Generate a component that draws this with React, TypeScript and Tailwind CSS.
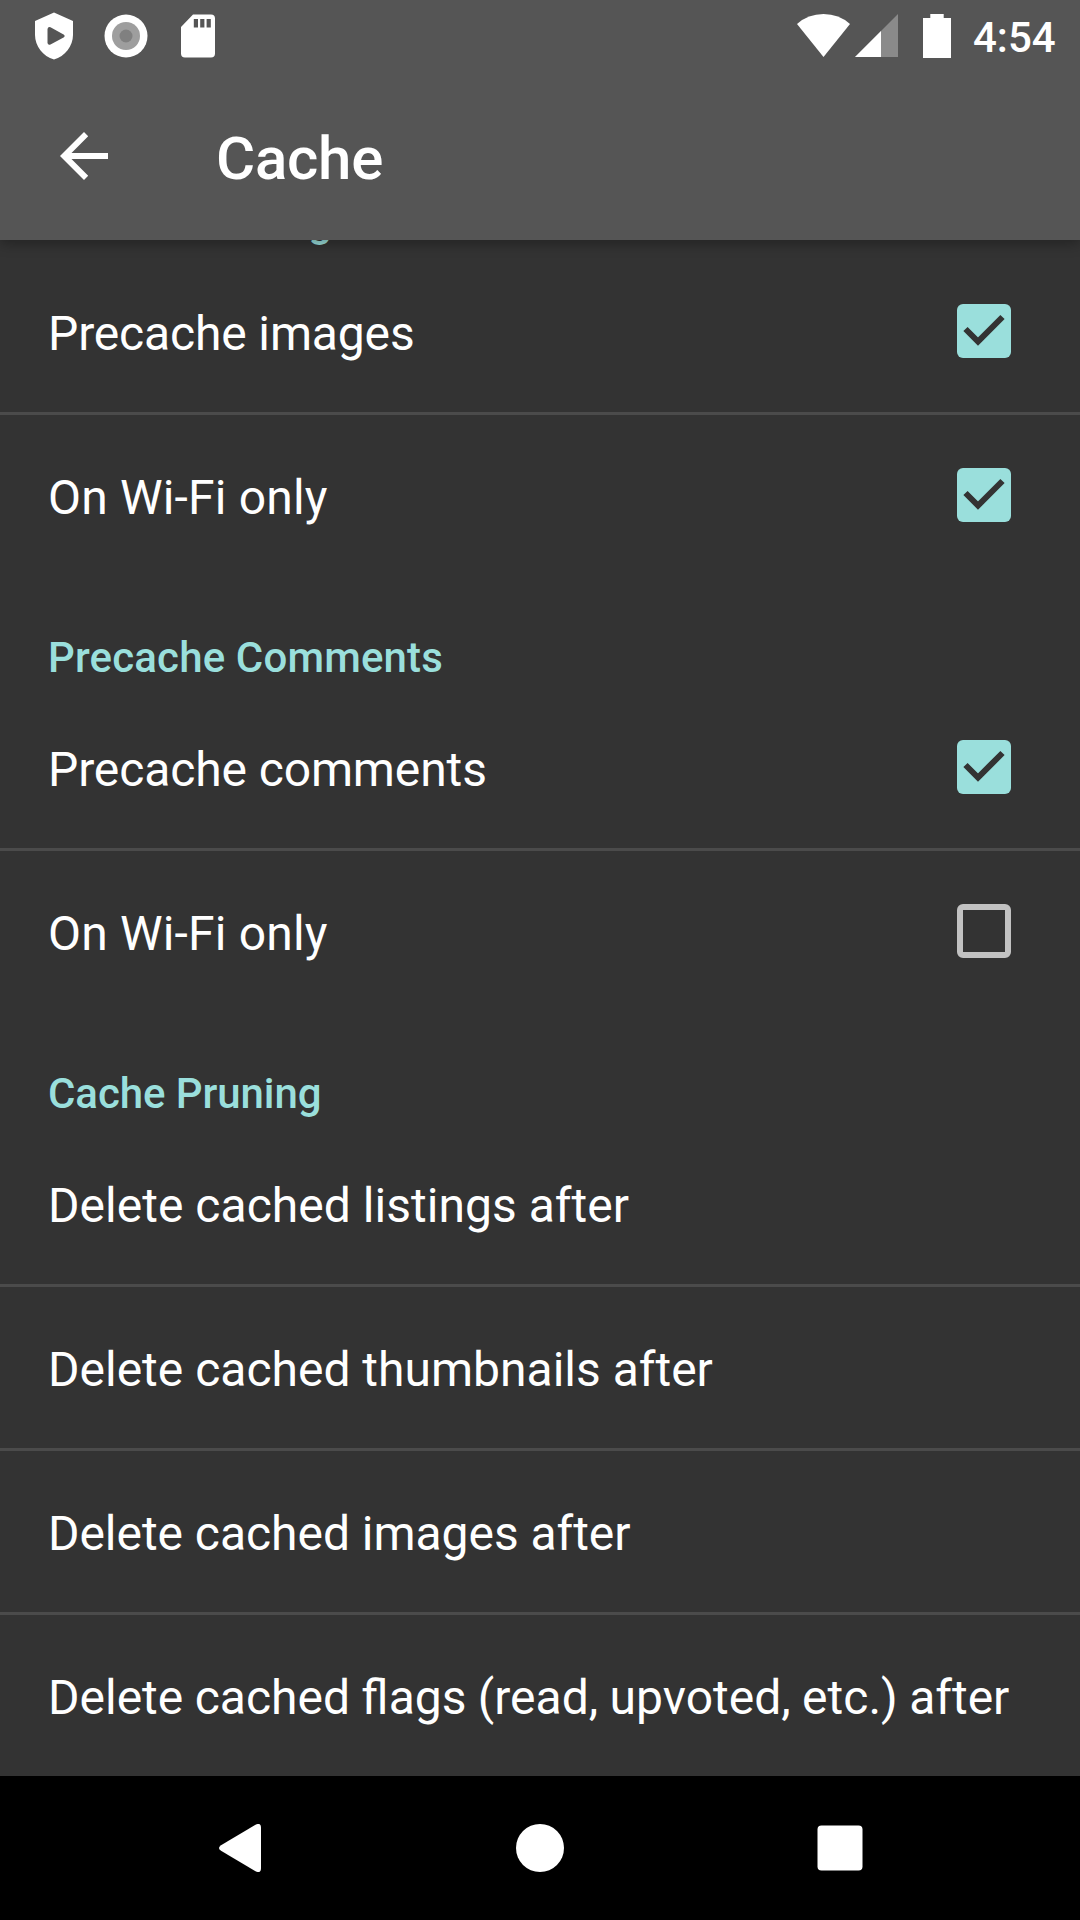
import React from "react";

type Item = { label: string; checked?: boolean; tracking?: string };
type Section = { title: string; tracking?: string; items: Item[] };

const sections: Section[] = [
  {
    title: "Precache Images",
    tracking: "tracking-[0.22px]",
    items: [
      { label: "Precache images", checked: true, tracking: "tracking-[-0.15px]" },
      { label: "On Wi-Fi only", checked: true, tracking: "tracking-[0.18px]" },
    ],
  },
  {
    title: "Precache Comments",
    tracking: "tracking-[0.15px]",
    items: [
      { label: "Precache comments", checked: true, tracking: "tracking-[-0.12px]" },
      { label: "On Wi-Fi only", checked: false, tracking: "tracking-[0.18px]" },
    ],
  },
  {
    title: "Cache Pruning",
    tracking: "tracking-[-0.08px]",
    items: [
      { label: "Delete cached listings after", tracking: "tracking-[0.03px]" },
      { label: "Delete cached thumbnails after" },
      { label: "Delete cached images after", tracking: "tracking-[-0.04px]" },
      { label: "Delete cached flags (read, upvoted, etc.) after", tracking: "[word-spacing:-0.5px]" },
    ],
  },
];

function Checkbox({ checked }: { checked: boolean }) {
  return (
    <svg width="54" height="54" viewBox="0 0 54 54" className="block shrink-0">
      {checked ? (
        <>
          <rect width="54" height="54" rx="6" fill="#9adfdc" />
          <path d="M8.5 25 L21 37.5 L45.5 13" fill="none" stroke="#333333" strokeWidth="6" />
        </>
      ) : (
        <rect x="3" y="3" width="48" height="48" rx="3" fill="none" stroke="#c2c2c2" strokeWidth="6" />
      )}
    </svg>
  );
}

function StatusBar() {
  return (
    <div className="flex h-[72px] items-start justify-between pl-[18px] pr-[24px]">
      <div className="flex">
        <svg width="72" height="72" viewBox="0 0 72 72">
          <path
            fillRule="evenodd"
            fill="#fff"
            d="M36 12.5 L55 21 V35 C55 46 47 56.500 36 59.500 C25 56.500 17 46 17 35 V21 Z M29.500 29 V43 Q30 45.500 32.500 44.500 L46 37.200 Q47.500 36 46 34.800 L32.500 27.300 Q30 26.500 29.500 29 Z"
          />
        </svg>
        <svg width="72" height="72" viewBox="0 0 72 72">
          <circle cx="36" cy="36" r="21.500" fill="#fff" />
          <circle cx="36" cy="36" r="14" fill="#9e9e9e" />
          <circle cx="36" cy="36" r="6.500" fill="#808080" />
        </svg>
        <svg width="72" height="72" viewBox="0 0 72 72">
          <path
            fillRule="evenodd"
            fill="#fff"
            d="M31 14.500 H49 Q53 14.500 53 18.500 V53.500 Q53 57.500 49 57.500 H23 Q19 57.500 19 53.500 V27 Z M31.800 19 V27.500 H36 V19 Z M38.200 19 V27.500 H42.400 V19 Z M44.600 19 V27.500 H48.800 V19 Z"
          />
        </svg>
      </div>
      <div className="flex items-start">
        <svg width="54" height="72" viewBox="0 0 54 72">
          <path d="M0 24 Q11 14 26.500 14 Q42 14 53 24 L26.500 57 Z" fill="#fff" />
        </svg>
        <svg width="44" height="72" viewBox="0 0 44 72" className="ml-[4px]">
          <path d="M0 57 L43 14 V57 Z" fill="#8a8a8a" />
          <path d="M0 57 L26 31 V57 Z" fill="#fff" />
        </svg>
        <svg width="28" height="72" viewBox="0 0 28 72" className="ml-[24px]">
          <path d="M7.300 14 H20.700 V18 H28 V58 H0 V18 H7.300 Z" fill="#fff" />
        </svg>
        <span className="ml-[22px] w-[83px] whitespace-nowrap text-[42px] font-medium leading-[76px]">4:54</span>
      </div>
    </div>
  );
}

export default function App() {
  return (
    <div className="flex h-[1920px] w-[1080px] flex-col overflow-hidden bg-[#333333] font-['Roboto',sans-serif] text-white">
      <header className="relative z-10 h-[240px] shrink-0 bg-[#555555] shadow-[0_4px_12px_rgba(0,0,0,0.3)]">
        <StatusBar />
        <div className="flex h-[168px] items-center pl-[60px]">
          <svg width="48" height="48" viewBox="0 0 48 48">
            <path d="M48 21 H11.500 L28.200 4.200 L24 0 L0 24 L24 48 L28.200 43.800 L11.500 27 H48 Z" fill="#fff" />
          </svg>
          <h1 className="mt-[6px] ml-[108px] text-[60px] font-medium leading-[70px] tracking-[-0.25px]">Cache</h1>
        </div>
      </header>

      <main className="-mt-[100px] h-[1636px] shrink-0 overflow-hidden">
        {sections.map((section) => (
          <section key={section.title}>
            <h2
              className={`h-[111px] pl-[48px] pt-[58px] text-[42px] font-medium leading-[48px] text-[#9adfdc] ${section.tracking ?? ""}`}
            >
              {section.title}
            </h2>
            <ul className="divide-y-[3px] divide-[#4b4b4b]">
              {section.items.map((item) => (
                <li key={item.label} className="box-content flex h-[161px] items-center justify-between">
                  <span
                    className={`whitespace-nowrap pl-[48px] pt-[4px] text-[48px] leading-[56px] ${item.tracking ?? ""}`}
                  >
                    {item.label}
                  </span>
                  {item.checked !== undefined && (
                    <div className="mr-[69px] pb-px">
                      <Checkbox checked={item.checked} />
                    </div>
                  )}
                </li>
              ))}
            </ul>
          </section>
        ))}
      </main>

      <nav className="flex h-[144px] shrink-0 items-center justify-between bg-black pl-[216px] pr-[216px]">
        <svg width="48" height="48" viewBox="0 0 48 48">
          <path d="M39.500 0.800 Q45 -2 45 4 V44 Q45 50 39.500 47.200 L5 26.800 Q1 24 5 21.200 Z" fill="#fff" />
        </svg>
        <svg width="48" height="48" viewBox="0 0 48 48">
          <circle cx="24" cy="24" r="24" fill="#fff" />
        </svg>
        <svg width="48" height="48" viewBox="0 0 48 48">
          <rect x="1.500" y="1.500" width="45" height="45" rx="4" fill="#fff" />
        </svg>
      </nav>
    </div>
  );
}
